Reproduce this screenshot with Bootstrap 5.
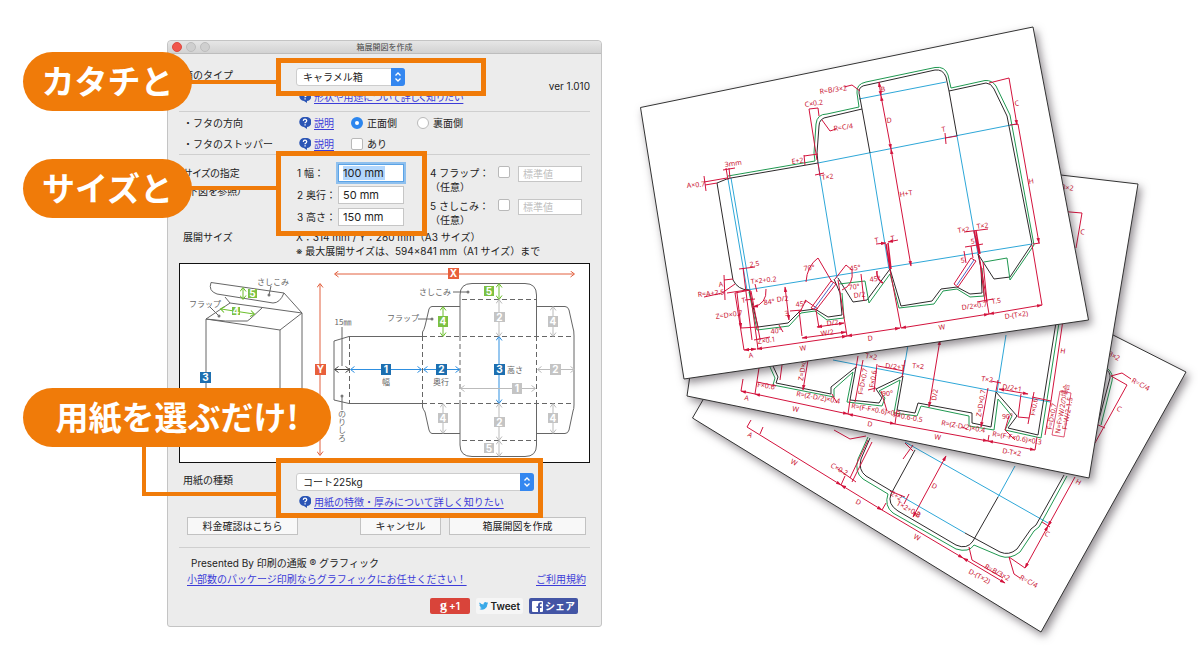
<!DOCTYPE html>
<html lang="ja">
<head>
<meta charset="utf-8">
<meta name="viewport" content="width=device-width, initial-scale=1">
<title>箱展開図を作成</title>
<link href="https://cdn.jsdelivr.net/npm/bootstrap@5.3.0/dist/css/bootstrap.min.css" rel="stylesheet">
<style>
  :root { --accent: #f07b09; --line: #cfcfcf; --mac: #2f7bea; }
  body { font-family: "Inter", "Noto Sans CJK JP", sans-serif; font-size: 10px; line-height: 14px; color: #222; background: #fff; }
  .stage { flex: 0 0 620px; padding: 40px 18px 28px 167px; }
  .sheets { flex: 1 1 0; min-width: 0; }
  svg { display: block; }

  /* dialog window */
  .dialog { background: #ececec; border: 1px solid #c4c4c4; border-radius: 4px 4px 3px 3px; }
  .titlebar { height: 13px; background: linear-gradient(#e6e6e6, #d2d2d2); border-bottom: 1px solid #bdbdbd; border-radius: 4px 4px 0 0; font-size: 8px; line-height: 12px; color: #444; }
  .lights { left: 4px; top: 1px; gap: 4px; }
  .lights i { width: 10px; height: 10px; border-radius: 50%; background: #cfcfcf; border: 1px solid #bdbdbd; }
  .lights i:first-child { background: #f0564c; border-color: #dd4a40; }
  .pane { padding: 0 11px 12px; }
  .pair { display: grid; grid-template-columns: 113px 1fr; padding-left: 4px; }
  .pair-top { padding-top: 14px; padding-bottom: 7px; }
  .rule { border-top: 1px solid var(--line); }
  .line-row { height: 21px; align-items: center; }
  .opt { width: 51px; }
  .tight { font-feature-settings: "palt"; }
  .dialog a { color: #3c3cd8; text-decoration: underline; text-underline-offset: 2px; }
  .help { width: 12px; height: 12px; margin: 0 3px; }

  .pick { height: 18px; }
  .pick select { height: 18px; width: 100%; padding: 0 18px 0 6px; font-size: 10px; line-height: 16px; color: #222; background: #fff; border: 1px solid #cdcdcd; border-radius: 3px; appearance: none; }
  .pick svg { right: 0; top: 0; width: 14px; height: 18px; pointer-events: none; }
  .pick-s { width: 109px; }
  .pick-l { width: 238px; }
  .tick { width: 12px; height: 12px; margin: 0; border: 1px solid #b9b9b9; background: #fff; appearance: none; border-radius: 2px; flex: none; }
  .tick[type=radio] { border-radius: 50%; }
  .tick[type=radio]:checked { border: 4px solid #2c86ee; }

  .size-row { height: 22px; }
  .size-row label { width: 42px; padding-left: 1px; }
  .field { height: 18px; width: 66px; padding: 0 4px; font-size: 11px; line-height: 16px; color: #222; background: #fff; border: 1px solid #c6c6c6; border-radius: 0; }
  .field.picked { border-color: #5ba3e6; box-shadow: 0 0 0 2px #8fc0ee; background: linear-gradient(#b3d7fd, #b3d7fd) 4px 1px / 42px 14px no-repeat #fff; }
  .field-sub { width: 64px; height: 16px; font-size: 10px; line-height: 14px; }
  .field-sub::placeholder { color: #c0c0c0; }
  .sizes { width: 134px; padding: 7px 0 2px; }
  .flaps { padding-top: 11px; gap: 5px; }
  .flaps label { width: 68px; }
  .plan { background: #fff; border: 1px solid #111; margin: 5px 0 10px; }
  .plain-btn { height: 18px; padding: 0; font-size: 10px; line-height: 16px; color: #222; background: #f8f8f8; border: 1px solid #c2c2c2; border-radius: 0; }
  .w-a { width: 111px; } .w-b { width: 81px; } .w-c { width: 137px; }
  .stack-link { padding-top: 2px; }
  .shares { gap: 6px; }
  .social { height: 16px; border: 0; border-radius: 2px; padding: 0 3px; font-size: 10px; line-height: 16px; font-weight: 600; display: flex; align-items: center; justify-content: center; gap: 2px; }

  /* callouts lying over the dialog */
  .pill { left: 23px; height: 59px; border-radius: 30px; background: var(--accent); color: #fff; font: 700 33px/56px "Noto Sans CJK JP", sans-serif; text-align: center; white-space: nowrap; }
  .ring { left: 276px; border: 5px solid var(--accent); }
  .wire { height: 4px; background: var(--accent); }
  .over { pointer-events: none; }

  /* drawings */
  .ink { fill: none; stroke: #666; stroke-width: 1; }
  .plan text { font-family: "Noto Sans CJK JP", sans-serif; font-size: 8px; fill: #666; text-anchor: middle; }
  .plan .num { font: 700 10px "Inter", sans-serif; fill: #fff; }
  .plan .down { writing-mode: vertical-rl; text-anchor: start; }
  .paper { fill: #fff; stroke: #333; stroke-width: 1; filter: drop-shadow(3px 4px 4px rgba(40, 30, 40, .5)); }
  .k { fill: none; stroke: #2d2a2b; }
  .g { fill: none; stroke: #1f9850; }
  .b { fill: none; stroke: #2ea7d8; }
  .r { fill: none; stroke: #d3123c; stroke-width: 1; }
  .dim text { font-family: "Noto Sans", sans-serif; font-size: 7px; fill: #c8102e; }
</style>
</head>
<body>
<main class="d-flex align-items-start">
  <section class="stage position-relative">
    <div class="dialog">
      <div class="titlebar position-relative text-center">
        <span class="lights d-flex position-absolute"><i></i><i></i><i></i></span>箱展開図を作成
      </div>
      <form class="pane" onsubmit="return false">
        <div class="pair pair-top">
          <label for="type">箱のタイプ</label>
          <div class="d-flex justify-content-between align-items-center">
            <div>
              <div class="pick pick-s position-relative">
                <select id="type"><option>キャラメル箱</option></select>
                <svg class="position-absolute" viewBox="0 0 14 18"><path d="M0 0h11a3 3 0 0 1 3 3v12a3 3 0 0 1-3 3H0z" fill="#3487f0"/><path d="M4.500 7.500 7 5l2.500 2.500M4.500 10.500 7 13l2.500-2.500" fill="none" stroke="#fff" stroke-width="1.300"/></svg>
              </div>
              <div class="d-flex align-items-center mt-1"><svg class="help" viewBox="0 0 12 12"><path d="M6 0a5.500 5 0 1 1 2 10L8 12 5 10A5.200 5 0 0 1 6 0z" fill="#2b55b5"/><path d="M4.300 3.800Q4.500 2.200 6 2.200T7.700 3.700Q7.700 4.600 6.100 5.700V6.300M6.100 7.300v1.300" fill="none" stroke="#fff" stroke-width="1.300"/></svg><a href="#" class="tight">形状や用途について詳しく知りたい</a></div>
            </div>
            <span>ver 1.010</span>
          </div>
        </div>
        <div class="rule"></div>
        <div class="pair line-row">
          <span>・フタの方向</span>
          <div class="d-flex align-items-center">
            <span class="opt d-flex align-items-center"><svg class="help" viewBox="0 0 12 12"><path d="M6 0a5.500 5 0 1 1 2 10L8 12 5 10A5.200 5 0 0 1 6 0z" fill="#2b55b5"/><path d="M4.300 3.800Q4.500 2.200 6 2.200T7.700 3.700Q7.700 4.600 6.100 5.700V6.300M6.100 7.300v1.300" fill="none" stroke="#fff" stroke-width="1.300"/></svg><a href="#">説明</a></span>
            <input class="tick ms-1" type="radio" name="side" id="front" checked><label for="front" class="ms-1 me-3">正面側</label>
            <input class="tick ms-1" type="radio" name="side" id="back"><label for="back" class="ms-1">裏面側</label>
          </div>
        </div>
        <div class="pair line-row">
          <span>・フタのストッパー</span>
          <div class="d-flex align-items-center">
            <span class="opt d-flex align-items-center"><svg class="help" viewBox="0 0 12 12"><path d="M6 0a5.500 5 0 1 1 2 10L8 12 5 10A5.200 5 0 0 1 6 0z" fill="#2b55b5"/><path d="M4.300 3.800Q4.500 2.200 6 2.200T7.700 3.700Q7.700 4.600 6.100 5.700V6.300M6.100 7.300v1.300" fill="none" stroke="#fff" stroke-width="1.300"/></svg><a href="#">説明</a></span>
            <input class="tick ms-1" type="checkbox" id="stop"><label for="stop" class="ms-1">あり</label>
          </div>
        </div>
        <div class="rule"></div>
        <div class="pair">
          <div class="flaps tight"><div>サイズの指定</div><div class="mt-1">（下図を参照）</div></div>
          <div class="d-flex">
            <div class="sizes">
              <div class="size-row d-flex align-items-center"><label for="s1">1 幅：</label><input id="s1" class="field picked" value="100 mm"></div>
              <div class="size-row d-flex align-items-center"><label for="s2">2 奥行：</label><input id="s2" class="field" value="50 mm"></div>
              <div class="size-row d-flex align-items-center"><label for="s3">3 高さ：</label><input id="s3" class="field" value="150 mm"></div>
            </div>
            <div class="flaps d-flex flex-column">
              <div class="d-flex align-items-start"><label for="s4">4 フラップ：<br>（任意）</label><input class="tick" type="checkbox" aria-label="4 フラップ"><input id="s4" class="field field-sub ms-2" placeholder="標準値"></div>
              <div class="d-flex align-items-start"><label for="s5">5 さしこみ：<br>（任意）</label><input class="tick" type="checkbox" aria-label="5 さしこみ"><input id="s5" class="field field-sub ms-2" placeholder="標準値"></div>
            </div>
          </div>
        </div>
        <div class="pair">
          <span>展開サイズ</span>
          <div class="text-nowrap">X：314 mm / Y：280 mm（A3 サイズ）<br>※ 最大展開サイズは、594×841 mm（A1 サイズ）まで</div>
        </div>

        <div class="plan">
          <svg viewBox="180 264 409 198" width="100%">
            <defs>
              <marker id="ao" markerWidth="7" markerHeight="7" refX="5" refY="3.500" orient="auto-start-reverse" markerUnits="userSpaceOnUse"><path d="M1.500 .5 5.500 3.500 1.500 6.500" fill="none" stroke="#e2603f"/></marker>
              <marker id="ab" markerWidth="7" markerHeight="7" refX="5" refY="3.500" orient="auto-start-reverse" markerUnits="userSpaceOnUse"><path d="M1.500 .5 5.500 3.500 1.500 6.500" fill="none" stroke="#2e8fe0"/></marker>
              <marker id="ag" markerWidth="7" markerHeight="7" refX="5" refY="3.500" orient="auto-start-reverse" markerUnits="userSpaceOnUse"><path d="M1.500 .5 5.500 3.500 1.500 6.500" fill="none" stroke="#6cbf2c"/></marker>
              <marker id="ac" markerWidth="7" markerHeight="7" refX="5" refY="3.500" orient="auto-start-reverse" markerUnits="userSpaceOnUse"><path d="M1.500 .5 5.500 3.500 1.500 6.500" fill="none" stroke="#bbb"/></marker>
              <marker id="ak" markerWidth="7" markerHeight="7" refX="5" refY="3.500" orient="auto-start-reverse" markerUnits="userSpaceOnUse"><path d="M1.500 .5 5.500 3.500 1.500 6.500" fill="none" stroke="#444"/></marker>
            </defs>
            <!-- box -->
            <path class="ink" d="M206 430V319L280 330V430M280 330 302 313V430M302 313 230 303 206 319M262 308 250 319Q247 322 245 321M245 321Q225 322 206 319M302 313 284 293 211 282.500Q208 291 217 294L273 303Q280 303 284 293M225 297 230 303"/>
            <path class="ink" stroke-width=".7" d="M271 286 269 295M210 307 218 315"/>
            <!-- unfolded net -->
            <path class="ink" d="M422 336.500H349L334 341V400L349 403.500H422M422.500 336V332Q424 330 425 326L429 309Q430 306.500 432 306.500H460M460 336V295Q460 283.500 472 283.500H525Q536.500 283.500 536.500 295V336M536.500 306.500H565Q568 306.500 569 310L573 328Q574 330 574 336V405Q574 409 573 411L569 430Q568 433.500 565 433.500H536.500M422.500 403V407Q423 409 425 412L429 430Q430 433.500 432 433.500H460M460 403V445Q460 456.500 472 456.500H525Q536.500 456.500 536.500 445V403"/>
            <path class="ink" stroke-dasharray="5 3" d="M349.500 336V403M422.500 336V403M460 336V403M536.500 336V403M422 336.500H574M422 403.500H574M462 299.500H536M462 440.500H536"/>
            <path class="ink" stroke-width=".7" d="M453 292H468M418 319H431M342 327V366M342 396V410"/>
            <g fill="#777"><circle cx="468" cy="292" r="1.500"/><circle cx="432" cy="319" r="1.500"/><circle cx="342" cy="396" r="1.500"/><circle cx="269" cy="295" r="1.500"/><circle cx="219" cy="316" r="1.500"/></g>
            <g fill="none" stroke="#e2603f"><path d="M335 274H574" marker-start="url(#ao)" marker-end="url(#ao)"/><path d="M320 284V455" marker-start="url(#ao)" marker-end="url(#ao)"/></g>
            <g fill="none" stroke="#2e8fe0"><path d="M351 369.500H421" marker-start="url(#ab)" marker-end="url(#ab)"/><path d="M424 369.500H459" marker-start="url(#ab)" marker-end="url(#ab)"/><path d="M499 337V403" marker-start="url(#ab)" marker-end="url(#ab)"/></g>
            <g fill="none" stroke="#6cbf2c"><path d="M443 307V336" marker-start="url(#ag)" marker-end="url(#ag)"/><path d="M499 284V299" marker-start="url(#ag)" marker-end="url(#ag)"/><path d="M243 288V299" marker-start="url(#ag)" marker-end="url(#ag)"/><path d="M221 309 254 314" marker-start="url(#ag)" marker-end="url(#ag)"/></g>
            <g fill="none" stroke="#bbb"><path d="M499 300V336" marker-start="url(#ac)" marker-end="url(#ac)"/><path d="M553 307V336" marker-start="url(#ac)" marker-end="url(#ac)"/><path d="M538 369.500H574" marker-start="url(#ac)" marker-end="url(#ac)"/><path d="M461 388.500H535" marker-start="url(#ac)" marker-end="url(#ac)"/><path d="M443 404V433" marker-start="url(#ac)" marker-end="url(#ac)"/><path d="M553 404V433" marker-start="url(#ac)" marker-end="url(#ac)"/><path d="M499 404V440" marker-start="url(#ac)" marker-end="url(#ac)"/><path d="M499 441V456" marker-start="url(#ac)" marker-end="url(#ac)"/></g>
            <path d="M335 369.500H349" stroke="#444" marker-start="url(#ak)" marker-end="url(#ak)"/>
            <g fill="#e8603c"><path d="M448 268h11v11h-11zM315 364h11v11h-11z"/></g>
            <g fill="#1d6fb0"><path d="M381 364h10v11h-10zM436 364h11v11h-11zM494 364h11v11h-11zM200 372h11v11h-11z"/></g>
            <g fill="#7cc142"><path d="M438 316h10v11h-10zM484 286h10v10h-10zM248 289h9v9h-9zM232 307h8v8h-8z"/></g>
            <g fill="#c4c4c4"><path d="M494 312h11v10h-11zM548 316h10v11h-10zM550 364h11v11h-11zM512 383h10v11h-10zM438 413h10v10h-10zM494 417h11v10h-11zM548 413h10v10h-10zM484 443h10v10h-10z"/></g>
            <text class="num" x="453.500" y="277">X</text><text class="num" x="320.500" y="373">Y</text>
            <text class="num" x="386" y="373">1</text><text class="num" x="441.500" y="373">2</text><text class="num" x="499.500" y="373">3</text><text class="num" x="205.500" y="381">3</text>
            <text class="num" x="443" y="325">4</text><text class="num" x="489" y="295">5</text><text class="num" x="252.500" y="297">5</text><text class="num" x="236" y="315">4</text>
            <text class="num" x="499.500" y="321">2</text><text class="num" x="553" y="325">4</text><text class="num" x="555.500" y="373">2</text><text class="num" x="517" y="392">1</text><text class="num" x="443" y="422">4</text><text class="num" x="499.500" y="426">2</text><text class="num" x="553" y="422">4</text><text class="num" x="489" y="452">5</text>
            <text x="435" y="295">さしこみ</text><text x="403" y="321">フラップ</text><text x="273" y="285">さしこみ</text><text x="205" y="307">フラップ</text>
            <text x="386" y="385">幅</text><text x="441" y="385">奥行</text><text x="515" y="373">高さ</text><text x="343" y="325">15㎜</text>
            <text class="down" x="342" y="410">のりしろ</text>
          </svg>
        </div>

        <div class="pair">
          <label for="stock">用紙の種類</label>
          <div>
            <div class="pick pick-l position-relative">
              <select id="stock"><option>コート225kg</option></select>
              <svg class="position-absolute" viewBox="0 0 14 18"><path d="M0 0h11a3 3 0 0 1 3 3v12a3 3 0 0 1-3 3H0z" fill="#3487f0"/><path d="M4.500 7.500 7 5l2.500 2.500M4.500 10.500 7 13l2.500-2.500" fill="none" stroke="#fff" stroke-width="1.300"/></svg>
            </div>
            <div class="d-flex align-items-center mt-1"><svg class="help" viewBox="0 0 12 12"><path d="M6 0a5.500 5 0 1 1 2 10L8 12 5 10A5.200 5 0 0 1 6 0z" fill="#2b55b5"/><path d="M4.300 3.800Q4.500 2.200 6 2.200T7.700 3.700Q7.700 4.600 6.100 5.700V6.300M6.100 7.300v1.300" fill="none" stroke="#fff" stroke-width="1.300"/></svg><a href="#">用紙の特徴・厚みについて詳しく知りたい</a></div>
          </div>
        </div>
        <div class="d-flex mt-2 ms-2 me-1 gap-2 pb-2 mb-1">
          <button type="button" class="plain-btn w-a me-auto">料金確認はこちら</button>
          <button type="button" class="plain-btn w-b">キャンセル</button>
          <button type="submit" class="plain-btn w-c">箱展開図を作成</button>
        </div>
        <div class="rule mb-2"></div>
        <div class="ps-2 pe-1">
          <div class="ms-1">Presented By 印刷の通販 ® グラフィック</div>
          <div class="stack-link d-flex justify-content-between"><a href="#">小部数のパッケージ印刷ならグラフィックにお任せください！</a><a href="#">ご利用規約</a></div>
          <div class="shares d-flex justify-content-end mt-2 pt-1 pe-2">
            <button type="button" class="social text-white" style="background:#d9443a;width:40px"><span style="font-family:'Liberation Serif',serif;font-size:14px">g</span>+1</button>
            <button type="button" class="social" style="background:#f6f6f6;color:#222;width:47px"><svg width="11" height="10" viewBox="0 0 24 20"><path d="M24 2.400a9.800 9.800 0 0 1-2.800.8A5 5 0 0 0 23.300.5a9.900 9.900 0 0 1-3.100 1.200 4.900 4.900 0 0 0-8.400 4.500A14 14 0 0 1 1.700 1 4.900 4.900 0 0 0 3.200 7.600 4.900 4.900 0 0 1 1 7c0 2.400 1.700 4.400 3.900 4.900a5 5 0 0 1-2.200 0 4.900 4.900 0 0 0 4.600 3.400A9.900 9.900 0 0 1 0 17.300 14 14 0 0 0 21.500 4.900 10 10 0 0 0 24 2.400z" fill="#3aa9e8"/></svg>Tweet</button>
            <button type="button" class="social text-white" style="background:#4355a5;width:49px"><svg width="11" height="11" viewBox="0 0 11 11"><path d="M1 0h9a1 1 0 0 1 1 1v9a1 1 0 0 1-1 1H8V7h1.600V5.200H8V4q0-1 1-1h.7V1.300H8.400Q6 1.300 6 3.800v1.400H4.500V7H6v4H1a1 1 0 0 1-1-1V1a1 1 0 0 1 1-1z" fill="#fff"/></svg>シェア</button>
          </div>
        </div>
      </form>
    </div>

    <div class="over">
      <div class="ring position-absolute" style="top:58px;width:210px;height:38px"></div>
      <div class="ring position-absolute" style="top:151px;width:151px;height:85px"></div>
      <div class="ring position-absolute" style="top:458px;width:267px;height:60px"></div>
      <div class="wire position-absolute" style="left:180px;top:80px;width:98px"></div>
      <div class="wire position-absolute" style="left:180px;top:186px;width:98px"></div>
      <div class="wire position-absolute" style="left:142px;top:440px;width:4px;height:56px"></div>
      <div class="wire position-absolute" style="left:142px;top:492px;width:136px"></div>
      <div class="pill position-absolute" style="top:52px;width:169px">カタチと</div>
      <div class="pill position-absolute" style="top:159px;width:169px">サイズと</div>
      <div class="pill position-absolute" style="top:388px;width:308px">用紙を選ぶだけ!</div>
    </div>
  </section>

  <section class="sheets">
    <svg viewBox="620 0 580 656" width="100%" role="img" aria-label="箱の展開図">
      <defs>
        <marker id="ar" markerWidth="6" markerHeight="4" refX="5" refY="2" orient="auto-start-reverse" markerUnits="userSpaceOnUse"><path d="M0 .3 5.500 2 0 3.700z" fill="#d3123c"/></marker>
      </defs>

      <!-- back sheet -->
      <path class="paper" d="M692.500 418 825 189 1186 372 1041 632z"/>
      <g class="dim">
        <path class="b" d="M905 442 1048 523M901 496 965 533M1015 466 998 497"/>
        <path class="k" d="M870 438 861 459Q858 470 866 476L893 492M915 450 891 494Q887 504 898 511L956 545Q967 550 973 541L998 497M965 533 1000 552Q1009 556 1017 549L1031 529 1036 525 1064 475M1104 368Q1111 372 1110 378L1098 423"/>
        <path class="g" d="M868 437 858 459Q854 472 863 479L888 494Q884 506 893 513L956 549Q969 553 974 545L1000 556Q1010 560 1020 552L1034 531 1039 527 1067 476M1107 368Q1114 374 1112 381L1101 425"/>
        <g class="r">
          <path d="M747 427 841 485" marker-end="url(#ar)"/><path d="M841 485 882 510" marker-start="url(#ar)" marker-end="url(#ar)"/><path d="M882 510 963 558" marker-end="url(#ar)"/><path d="M963 558 1005 583" marker-start="url(#ar)" marker-end="url(#ar)"/>
          <path d="M747 427 751 420M760 434 763 427M841 485 845 476M882 510 886 503"/><path d="M868 440 850 478M872 442 852 482M838 469 856 482M834 430 850 439 866 436"/>
          <path d="M946 456 913 517" marker-start="url(#ar)" marker-end="url(#ar)"/><path d="M913 445 903 459M905 443 913 451M890 491 905 497M909 494 904 504"/>
          <path d="M1075 477 1048 526" marker-end="url(#ar)"/><path d="M1048 526 1025 568" marker-start="url(#ar)" marker-end="url(#ar)"/><path d="M1025 568 1009 557 1014 574 1020 578M969 547 972 560 1003 578M1042 522 1050 527"/>
          <path d="M1111 376 1127 385 1095 443M1111 376 1122 373 1131 379M1096 424 1105 428"/>
        </g>
        <text transform="translate(747 436) rotate(28)">A</text><text transform="translate(790 463) rotate(28)">W</text><text transform="translate(855 503) rotate(28)">D</text><text transform="translate(913 538) rotate(28)">W</text>
        <text transform="translate(830 467) rotate(28)">C×0.2</text><text transform="translate(890 495) rotate(28)">2+2</text><text transform="translate(896 505) rotate(28)">T×2+0.2</text><text transform="translate(931 487) rotate(28)">D</text><text transform="translate(915 516) rotate(28)">B</text>
        <text transform="translate(968 573) rotate(28)">D-(T×2)</text><text transform="translate(984 568) rotate(28)">R=B/3×2</text><text transform="translate(1019 579) rotate(28)">R=C/4</text><text transform="translate(1044 535) rotate(28)">C</text><text transform="translate(1075 483) rotate(28)">H</text><text transform="translate(1116 410) rotate(28)">C</text><text transform="translate(1131 382) rotate(28)">R=C/4</text><text transform="translate(1094 348) rotate(28)">R=B/3×2</text>
      </g>

      <!-- middle sheet -->
      <path class="paper" d="M687 396 725 136 1138 184 1089 478z"/>
      <g class="dim">
        <path class="b" d="M833 360 1050 402M908 345 903 375M1006 335 997 392"/>
        <path class="k" d="M773 366 778 377 776 383 831 394 831 387 856 367 850 400 879 403 882 398 876 389 903 376 897 410 915 413 918 403 972 413 972 423 991 427 996 392 1017 416 1008 428 1038 435 1058 310"/>
        <path class="g" d="M770 367 775 378 773 385 834 397 834 389 853 372 847 402 882 406 885 398 879 391 900 380 894 413 917 416 921 406 969 416 969 426 994 430 998 399 1012 416 1005 430 1041 438 1061 310"/>
        <g class="r">
          <path d="M741 391 755 394" marker-start="url(#ar)"/><path d="M755 394 848 414" marker-start="url(#ar)" marker-end="url(#ar)"/><path d="M848 414 895 424" marker-start="url(#ar)" marker-end="url(#ar)"/><path d="M895 424 988 441" marker-end="url(#ar)"/><path d="M988 441 1035 450" marker-start="url(#ar)" marker-end="url(#ar)"/>
          <path d="M741 391 743 379M755 394 759 368M848 414 850 400M895 424 897 410M988 441 989 435M1035 450 1037 437"/>
          <path d="M808 360 803 390" marker-end="url(#ar)"/><path d="M782 365 780 380M757 382 776 386M832 394 837 403M858 356 856 368M863 360 855 402M877 364 874 392M905 360 902 377M878 366 904 371M868 390 876 388M881 391 887 411"/>
          <path d="M940 340 929 407" marker-start="url(#ar)" marker-end="url(#ar)"/><path d="M991 381 1001 383M998 380 996 391M988 388 981 427" marker-end="url(#ar)"/><path d="M999 389 1028 394" marker-start="url(#ar)" marker-end="url(#ar)"/><path d="M1021 394 1018 417 1029 418M1034 392 1028 424M1032 397 1051 401M1045 435 1051 401 1063 320M1009 416 1005 430 1015 440M967 429 962 427"/>
          <path d="M1060 391 1071 393 1064 437 1052 435z" stroke-width=".7"/><path d="M1046 210 1082 213 1076 248"/>
        </g>
        <text transform="translate(744 400) rotate(10)">A</text><text transform="translate(792 411) rotate(10)">W</text><text transform="translate(867 426) rotate(10)">D</text><text transform="translate(934 439) rotate(10)">W</text><text transform="translate(1002 453) rotate(10)">D-T×2</text>
        <text transform="translate(757 387) rotate(8)">F×0.6</text><text transform="translate(796 396) rotate(10)">R=(Z-D/2)×0.4</text><text transform="translate(851 408) rotate(10)">R=(F-F×0.6)×0.3</text><text transform="translate(893 417) rotate(10)">F×0.6-0.5</text><text transform="translate(941 425) rotate(10)">R=(Z-D/2)×0.4</text><text transform="translate(992 436) rotate(10)">R=(F-F×0.6)×0.3</text>
        <text transform="translate(865 358) rotate(10)">T×2</text><text transform="translate(885 368) rotate(6)">D/2+T</text><text transform="translate(912 368) rotate(6)">T×2</text><text transform="translate(882 396)">90°</text><text transform="translate(1002 419)">90°</text><text transform="translate(981 381) rotate(8)">T×2</text><text transform="translate(1002 389) rotate(8)">D/2+1</text>
        <text transform="translate(803 381) rotate(-80)">Z=D×0.7</text><text transform="translate(863 395) rotate(-80)">F=D×0.7</text><text transform="translate(874 388) rotate(-80)">F×0.6</text><text transform="translate(936 401) rotate(-80)">D/2</text><text transform="translate(981 417) rotate(-80)">Z=D×0.7</text><text transform="translate(1035 416) rotate(-80)">F×0.6</text><text transform="translate(1052 430) rotate(-80)">F=D×0.7</text><text transform="translate(1060 434) rotate(-80)">N=F&gt;W/2の場合</text><text transform="translate(1067 430) rotate(-80)">F=W/2-1.5</text>
        <text transform="translate(1060 353) rotate(8)">H</text><text transform="translate(1080 234) rotate(8)">C</text><text transform="translate(1046 187) rotate(8)">R=B/3×2</text>
      </g>

      <!-- front sheet -->
      <path class="paper" d="M640.500 107.500 1033 27 1088.500 320 684 379z"/>
      <g class="dim">
        <path class="b" d="M818 163 1016 124M859 99 946 82M818 163 837 278M870 153 889 269M957 136 978 254M728 179 747 290M731 178 750 290M747 290 1032 244"/>
        <path class="k" d="M728 178.500 717 183 733 280Q738 290 749 290L758 327 788 323 800 311 815 309 828 317 842 315 840 293 834 279M838 278 853 302 867 300 890 269 901 306 932 301 941 289 957 287 970 294 982 293 981 268 978 254 994 279 1010 277 1032 244 1007 116 994 89Q991 83 986 83L949 91 946 77Q943 69 935 70L867 85Q858 86 859 93L862 109 828 117Q819 118 819 126L817 153 818 163 728 178.500M862 109 870 153M949 91 957 136"/>
        <path class="g" d="M728 176 815 161 814 153 816 124Q817 114 827 114L859 107 857 93Q856 84 866 82L935 67.500Q945 66 948 75L951 88 985 80.500Q992 80 996 86L1010 115 1034 245 1010 280 1007 258 984 262M749 292 757 330 789 326 801 313 815 311 827 320 844 318 842 293M839 284 865 281 869 303 890 274 899 308 934 304 943 291 957 289 970 297 984 296 982 268"/>
        <g class="r">
          <path d="M744 350 756 349" marker-start="url(#ar)" marker-end="url(#ar)"/><path d="M757 349 847 336" marker-start="url(#ar)" marker-end="url(#ar)"/><path d="M847 336 900 328" marker-start="url(#ar)" marker-end="url(#ar)"/><path d="M901 328 989 314" marker-start="url(#ar)" marker-end="url(#ar)"/><path d="M989 314 1042 305" marker-start="url(#ar)" marker-end="url(#ar)"/>
          <path d="M744 350 735 293 750 290 758 349M751 291 760 339M737 293 741 328" marker-end="url(#ar)"/><path d="M741 328 759 327M754 340 770 337M847 336 838 280M901 328 890 270M989 314 979 255M1042 305 1032 245"/>
          <path d="M879 82 881 96" marker-start="url(#ar)" marker-end="url(#ar)"/><path d="M881 96 891 149" marker-start="url(#ar)" marker-end="url(#ar)"/><path d="M891 149 911 266" marker-start="url(#ar)" marker-end="url(#ar)"/><path d="M989 83 1009 78 1017 125" marker-end="url(#ar)"/><path d="M1010 125 1018 124 1039 243" marker-end="url(#ar)"/><path d="M1033 244 1040 243"/>
          <path d="M957 136 945 138M945 133 946 144M727 178 704 182M705 185 717 183M704 176 706 191M723 170 735 168M726 168 728 180M729 168 730 178"/>
          <path d="M809 109 818 108 819 116M809 109 817 160M804 156 818 154M804 155 805 165M818 163 820 176M815 175 824 173M822 120 830 131 836 129M844 87 852 85 860 91"/>
          <path d="M724 275 725 300M724 280 733 279M704 297 722 293 735 284M727 293 747 290M739 269 755 267M743 268 752 340M755 284 757 292M745 300 755 299M766 289Q767 304 753 307" marker-end="url(#ar)"/>
          <path d="M785 287 789 320" marker-start="url(#ar)" marker-end="url(#ar)"/><path d="M790 311 802 310M779 325 783 332M799 310 802 336M805 300 818 309M800 312 806 300M816 310 819 328"/>
          <path d="M817 327 844 323" marker-start="url(#ar)" marker-end="url(#ar)"/><path d="M802 338 846 332" marker-start="url(#ar)" marker-end="url(#ar)"/><path d="M832 282 818 258Q807 266 806 282M835 279 846 265 852 270Q854 285 842 290M861 274 864 301"/><path d="M811 308 831 281 836 284 816 310z"/><path d="M814 309 833 283" stroke="#5066c8"/>
          <path d="M886 244 890 269M888 243 891 269" stroke-width="1.500"/><path d="M876 244 886 243" marker-end="url(#ar)"/><path d="M898 240 888 242" marker-end="url(#ar)"/><path d="M877 271Q876 279 883 283M974 231 979 254M976 231 980 254" stroke-width="1.500"/><path d="M964 232 988 229M965 247 983 244M971 246 973 258M964 251 966 263M954 284 971 258 976 261 958 287z"/><path d="M957 285 974 260" stroke="#5066c8"/><path d="M980 262 985 302M983 262 987 302M977 302 993 299"/>
        </g>
        <text transform="translate(687 188) rotate(-5)">A×0.7</text><text transform="translate(725 167) rotate(-8)">3mm</text><text transform="translate(792 164) rotate(-8)">E+2</text><text transform="translate(805 107) rotate(-8)">C×0.2</text><text transform="translate(822 180) rotate(-8)">T×2</text><text transform="translate(834 131) rotate(-8)">R=C/4</text><text transform="translate(820 94) rotate(-8)">R=B/3×2</text>
        <text transform="translate(881 92) rotate(-9)">B</text><text transform="translate(887 123) rotate(-9)">D</text><text transform="translate(942 132) rotate(-9)">T</text><text transform="translate(900 197) rotate(-9)">H+T</text><text transform="translate(1015 106) rotate(-9)">C</text><text transform="translate(1029 184) rotate(-9)">H</text>
        <text transform="translate(750 267) rotate(-8)">2.5</text><text transform="translate(751 284) rotate(-6)">T×2+0.2</text><text transform="translate(698 297) rotate(-6)">R=A+2.5</text><text transform="translate(719 287) rotate(-8)">A</text><text transform="translate(742 303) rotate(-8)">T</text><text transform="translate(716 319) rotate(-8)">Z=D×0.7</text><text transform="translate(764 305) rotate(-8)">84°</text><text transform="translate(777 302) rotate(-8)">D/2</text><text transform="translate(785 316) rotate(-8)">3</text><text transform="translate(796 307) rotate(-8)">45°</text><text transform="translate(804 271) rotate(-8)">70°</text><text transform="translate(850 271) rotate(-8)">45°</text><text transform="translate(849 290) rotate(-8)">70°</text><text transform="translate(854 298) rotate(-8)">D/2</text><text transform="translate(870 282) rotate(-8)">45°</text><text transform="translate(771 334) rotate(-8)">40°</text><text transform="translate(758 344) rotate(-8)">Z×0.1</text><text transform="translate(827 326) rotate(-8)">D/2</text><text transform="translate(821 336) rotate(-8)">W/2</text>
        <text transform="translate(749 358) rotate(-8)">A</text><text transform="translate(800 351) rotate(-8)">W</text><text transform="translate(868 341) rotate(-8)">D</text><text transform="translate(939 330) rotate(-8)">W</text><text transform="translate(1005 319) rotate(-8)">D-(T×2)</text>
        <text transform="translate(875 243) rotate(-8)">T</text><text transform="translate(891 241) rotate(-8)">T</text><text transform="translate(958 233) rotate(-8)">T×2</text><text transform="translate(977 229) rotate(-8)">T×2</text><text transform="translate(971 244) rotate(-8)">5</text><text transform="translate(961 263) rotate(-8)">5</text><text transform="translate(962 310) rotate(-8)">D/2×0.7</text><text transform="translate(992 304) rotate(-8)">T.5</text>
      </g>
    </svg>
  </section>
</main>
<script src="https://cdn.jsdelivr.net/npm/bootstrap@5.3.0/dist/js/bootstrap.bundle.min.js"></script>
</body>
</html>
